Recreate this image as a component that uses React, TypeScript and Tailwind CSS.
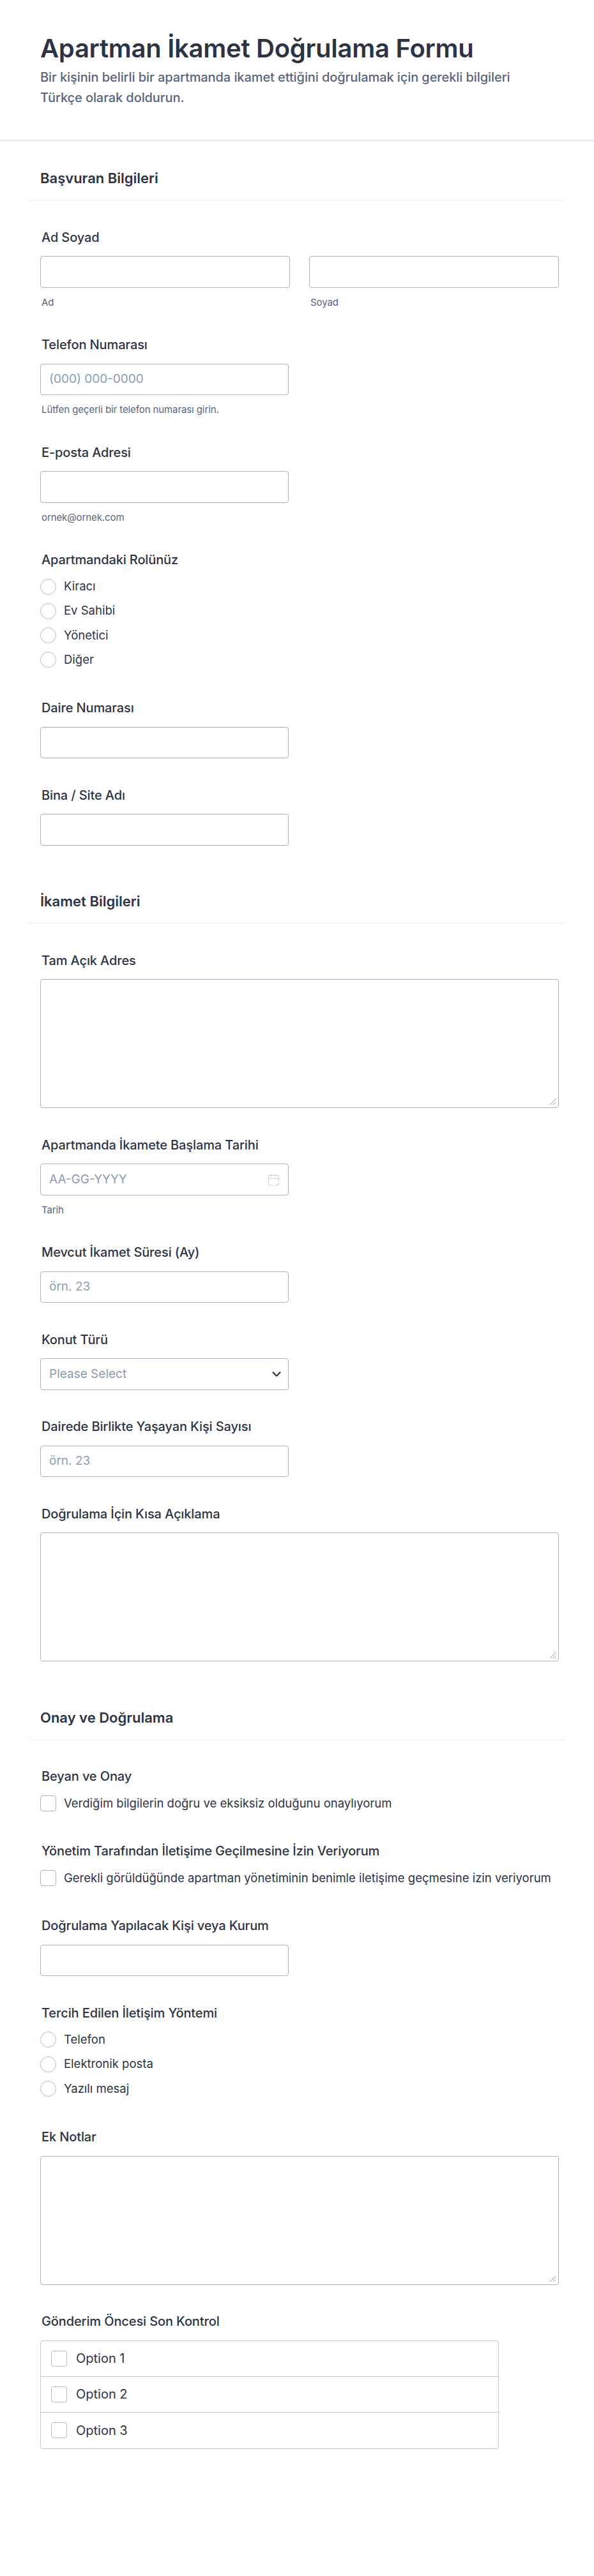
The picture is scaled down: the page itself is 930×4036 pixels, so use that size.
import { CalendarCheck2, ChevronDown } from "lucide-react";
import type { ReactNode } from "react";

const inputBox = "h-[49.5px] rounded-[4px] border border-[#adb2bf] bg-white";
const helper = "mt-[14px] h-[18px] pl-[2px] text-[15px] leading-[18px] tracking-[-0.1px] text-[#57647e]";

function Field({ label, sub, children }: { label: string; sub?: string; children: ReactNode }) {
  return (
    <div className="pt-[43.5px]">
      <div className="h-7 pl-[2px] text-[20px] leading-7 font-medium tracking-[-0.12px] text-[#2c3345]">{label}</div>
      <div className="mt-[15.5px]">{children}</div>
      {sub && <div className={helper}>{sub}</div>}
    </div>
  );
}

function TextInput({ placeholder }: { placeholder?: string }) {
  return (
    <div className={`${inputBox} flex w-[389px] items-center pl-[13px] text-[19px] text-[#8d9bb3]`}>{placeholder}</div>
  );
}

function TextArea() {
  return (
    <div className="relative h-[202px] w-[812px] rounded-[4px] border border-[#adb2bf] bg-white">
      <svg className="absolute right-[3px] bottom-[3px] h-3 w-3" viewBox="0 0 12 12" fill="none" stroke="#9a9ea6">
        <path d="M2 11 11 2M7 11l4-4" />
      </svg>
    </div>
  );
}

function Radios({ items }: { items: string[] }) {
  return (
    <div className="mt-[1px] mb-[5.5px] flex flex-col gap-[13.33px]">
      {items.map((item) => (
        <div key={item} className="flex h-[25px] items-center gap-[12px] text-[18.5px] text-[#2c3345]">
          <span className="h-[25px] w-[25px] rounded-full border border-[#b8bcc8]" />
          {item}
        </div>
      ))}
    </div>
  );
}

function Check({ text }: { text: string }) {
  return (
    <div className="mt-[1px] mb-[5px] flex h-[25px] items-center gap-[12px] text-[18.5px] whitespace-nowrap text-[#2c3345]">
      <span className="h-[25px] w-[25px] shrink-0 rounded-[4px] border border-[#adb2bf]" />
      {text}
    </div>
  );
}

function SectionTitle({ title }: { title: string }) {
  return (
    <div className="-ml-[18px] w-[838px] border-b border-[#eceef2] pb-[20px] pl-[18px] text-[22px] leading-7 font-semibold text-[#2c3345]">
      {title}
    </div>
  );
}

export default function App() {
  return (
    <div className="min-h-screen bg-white font-['Inter',sans-serif]">
      <header className="h-[221px] border-b border-[#d8dae9] pt-[50px] pl-[63px]">
        <h1 className="text-[40px] leading-[52px] font-semibold tracking-[-0.27px] text-[#2c3345]">
          Apartman İkamet Doğrulama Formu
        </h1>
        <p className="mt-[3px] w-[780px] text-[20px] leading-8 font-medium tracking-[-0.08px] text-[#57647e]">
          Bir kişinin belirli bir apartmanda ikamet ettiğini doğrulamak için gerekli bilgileri Türkçe olarak doldurun.
        </p>
      </header>

      <main className="pl-[63px]">
        <section className="pt-[44px]">
          <SectionTitle title="Başvuran Bilgileri" />
          <Field label="Ad Soyad">
            <div className="flex gap-[30px]">
              <div>
                <div className={`${inputBox} w-[391px]`} />
                <div className={helper}>Ad</div>
              </div>
              <div>
                <div className={`${inputBox} w-[391px]`} />
                <div className={helper}>Soyad</div>
              </div>
            </div>
          </Field>
          <Field label="Telefon Numarası" sub="Lütfen geçerli bir telefon numarası girin.">
            <TextInput placeholder="(000) 000-0000" />
          </Field>
          <Field label="E-posta Adresi" sub="ornek@ornek.com">
            <TextInput />
          </Field>
          <Field label="Apartmandaki Rolünüz">
            <Radios items={["Kiracı", "Ev Sahibi", "Yönetici", "Diğer"]} />
          </Field>
          <Field label="Daire Numarası">
            <TextInput />
          </Field>
          <Field label="Bina / Site Adı">
            <TextInput />
          </Field>
        </section>

        <section className="pt-[73.5px]">
          <SectionTitle title="İkamet Bilgileri" />
          <Field label="Tam Açık Adres">
            <TextArea />
          </Field>
          <Field label="Apartmanda İkamete Başlama Tarihi" sub="Tarih">
            <div className={`${inputBox} flex w-[389px] items-center justify-between pr-[12px] pl-[13px] text-[19px] text-[#8d9bb3]`}>
              AA-GG-YYYY
              <CalendarCheck2 className="h-[21px] w-[21px] text-[#cdd2dc]" strokeWidth={1.4} />
            </div>
          </Field>
          <Field label="Mevcut İkamet Süresi (Ay)">
            <TextInput placeholder="örn. 23" />
          </Field>
          <Field label="Konut Türü">
            <div className={`${inputBox} flex w-[389px] items-center justify-between pr-[7px] pl-[13px] text-[19px] text-[#8d9bb3]`}>
              Please Select
              <ChevronDown className="h-[22px] w-[22px] text-[#2c3345]" strokeWidth={2.5} />
            </div>
          </Field>
          <Field label="Dairede Birlikte Yaşayan Kişi Sayısı">
            <TextInput placeholder="örn. 23" />
          </Field>
          <Field label="Doğrulama İçin Kısa Açıklama">
            <TextArea />
          </Field>
        </section>

        <section className="pt-[73.5px]">
          <SectionTitle title="Onay ve Doğrulama" />
          <Field label="Beyan ve Onay">
            <Check text="Verdiğim bilgilerin doğru ve eksiksiz olduğunu onaylıyorum" />
          </Field>
          <Field label="Yönetim Tarafından İletişime Geçilmesine İzin Veriyorum">
            <Check text="Gerekli görüldüğünde apartman yönetiminin benimle iletişime geçmesine izin veriyorum" />
          </Field>
          <Field label="Doğrulama Yapılacak Kişi veya Kurum">
            <TextInput />
          </Field>
          <Field label="Tercih Edilen İletişim Yöntemi">
            <Radios items={["Telefon", "Elektronik posta", "Yazılı mesaj"]} />
          </Field>
          <Field label="Ek Notlar">
            <TextArea />
          </Field>
          <Field label="Gönderim Öncesi Son Kontrol">
            <div className="w-[718px] divide-y divide-[#c4c6cb] rounded-[4px] border border-[#c4c6cb]">
              {["Option 1", "Option 2", "Option 3"].map((option) => (
                <div key={option} className="flex h-[56px] items-center gap-[14px] pl-[16px] text-[20px] text-[#2c3345]">
                  <span className="h-[25px] w-[25px] rounded-[4px] border border-[#b8bcc8]" />
                  {option}
                </div>
              ))}
            </div>
          </Field>
        </section>
      </main>
    </div>
  );
}
